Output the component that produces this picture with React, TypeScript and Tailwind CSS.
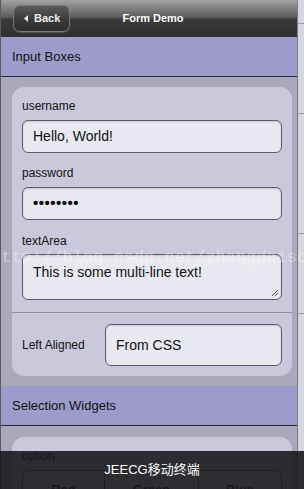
import React from "react";

const font = { fontFamily: '"Liberation Sans", "Noto Sans CJK SC", sans-serif' };

function Field({ children, h = "h-[33px]" }: { children: React.ReactNode; h?: string }) {
  return (
    <div
      className={`${h} rounded-[6px] border border-[#5c5c6a] bg-[#e9e9f1] px-[10px] flex items-center text-[14px] text-[#111] shadow-[inset_0_1px_2px_rgba(0,0,0,0.15)]`}
    >
      {children}
    </div>
  );
}

export default function App() {
  return (
    <div className="relative w-[304px] h-[489px] overflow-hidden flex bg-[#a9a9bb]" style={font}>
      <div className="w-[297px] flex flex-col border-l border-[#5a5a5a]">
        {/* Header */}
        <div className="h-[37px] shrink-0 relative flex items-center justify-center bg-[linear-gradient(#a2a2a2,#5c5c5c_46%,#3a3a3a_52%,#2f2f2f)]">
          <div className="absolute left-[12px] top-[5px] w-[57px] h-[27px] rounded-[7px] border border-[#7a7a7a] bg-[linear-gradient(#5a5a5a,#3c3c3c_50%,#2c2c2c)] flex items-center pl-[10px] gap-[6px] shadow-[0_1px_0_rgba(255,255,255,0.15)]">
            <svg width="4" height="7" viewBox="0 0 4 7"><path d="M4 0 L0 3.5 L4 7Z" fill="#e8e8e8" /></svg>
            <span className="text-[11px] font-bold text-[#eee]">Back</span>
          </div>
          <span className="text-[11px] font-bold text-white ml-[8px]">Form Demo</span>
        </div>

        {/* Section header */}
        <div className="h-[40px] shrink-0 bg-[#9d9bcc] border-b border-[#2a2a3a] flex items-center pl-[11px] text-[13px] text-[#111]">
          Input Boxes
        </div>

        <div className="pl-[11px] pr-[5px] pt-[10px] pb-[10px]">
          <div className="rounded-[12px] bg-[#c9c9db] pl-[10px] pr-[10px] pt-[12px] pb-[10px] flex flex-col">
            <div className="text-[12px] leading-[14px] text-[#111]">username</div>
            <div className="mt-[7px]"><Field>Hello, World!</Field></div>
            <div className="mt-[13px] text-[12px] leading-[14px] text-[#111]">password</div>
            <div className="mt-[7px]">
              <Field><span className="text-[15px] font-bold tracking-[0.5px]">••••••••</span></Field>
            </div>
            <div className="mt-[14px] text-[12px] leading-[14px] text-[#111]">textArea</div>
            <div className="mt-[6px] relative">
              <div className="h-[46px] rounded-[6px] border border-[#5c5c6a] bg-[#e9e9f1] px-[10px] pt-[9px] text-[14px] leading-[16px] text-[#111] shadow-[inset_0_1px_2px_rgba(0,0,0,0.15)]">
                This is some multi-line text!
              </div>
              <svg className="absolute right-[3px] bottom-[3px]" width="8" height="8" viewBox="0 0 8 8">
                <path d="M1 7 L7 1 M4 7 L7 4" stroke="#555" strokeWidth="1" />
              </svg>
            </div>
            <div className="mt-[12px] -mx-[10px] h-px bg-[#8e8ea0]" />
            <div className="mt-[11px] flex items-center">
              <div className="w-[83px] text-[12px] text-[#111]">Left Aligned</div>
              <div className="flex-1">
                <Field h="h-[42px]">From CSS</Field>
              </div>
            </div>
          </div>
        </div>

        <div className="h-[40px] shrink-0 bg-[#9d9bcc] border-b border-[#2a2a3a] flex items-center pl-[11px] text-[13px] text-[#111]">
          Selection Widgets
        </div>

        <div className="pl-[11px] pr-[5px] pt-[11px]">
          <div className="rounded-t-[12px] bg-[#c9c9db] px-[10px] pt-[12px] h-[80px]">
            <div className="text-[12px] leading-[14px] text-[#111]">option</div>
            <div className="mt-[7px] h-[40px] flex rounded-t-[6px] border border-[#555] overflow-hidden bg-[#dcdce8] text-[13px] font-bold text-[#222]">
              <div className="w-[82px] border-r border-[#555] flex items-center justify-center">Red</div>
              <div className="w-[94px] border-r border-[#555] flex items-center justify-center">Green</div>
              <div className="flex-1 flex items-center justify-center">Blue</div>
            </div>
          </div>
        </div>
      </div>

      {/* right strip */}
      <div className="w-[7px] flex flex-col border-l border-[#7c7c88] bg-[#d6d6de]">
        <div className="h-[24px] border-b border-[#9a9aa6]" />
        <div className="h-[90px] border-b border-[#9a9aa6]" />
        <div className="h-[120px] border-b border-[#9a9aa6]" />
        <div className="h-[80px] border-b border-[#9a9aa6]" />
      </div>

      {/* watermark */}
      <div
        className="absolute left-[-9px] top-[248px] text-[17px] leading-[20px] whitespace-nowrap text-[rgba(255,255,255,0.4)] pointer-events-none"
        style={{ fontFamily: '"Liberation Mono", monospace' }}
      >
        http://blog.csdn.net/zhangdaiscott
      </div>

      {/* bottom overlay */}
      <div className="absolute left-0 right-0 bottom-0 h-[38px] bg-[rgba(22,22,24,0.88)] flex items-center justify-center">
        <span className="text-[13px] text-white">JEECG移动终端</span>
      </div>
    </div>
  );
}
